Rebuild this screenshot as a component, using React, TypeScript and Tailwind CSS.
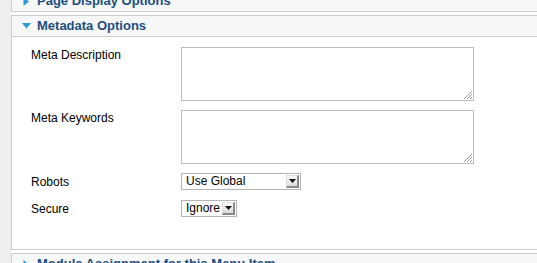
import React from "react";

const TITLE = "text-[13px] leading-[20px] font-bold text-[#1d4e7e]";

function ArrowDown() {
  return (
    <svg width="9" height="6" viewBox="0 0 9 6" className="shrink-0">
      <path d="M0 0 H9 L4.5 5.5 Z" fill="#2b9ad6" />
    </svg>
  );
}

function ArrowRight() {
  return (
    <svg width="9" height="9" viewBox="0 0 9 9" className="shrink-0">
      <path d="M1.5 0 L7 4.5 L1.5 9 Z" fill="#2b9ad6" />
    </svg>
  );
}

function PanelHeader({ title, open = false }: { title: string; open?: boolean }) {
  return (
    <div className="h-[20px] flex items-center gap-[6px] pl-[10px] bg-[#f6f7f7]">
      {open ? <ArrowDown /> : <ArrowRight />}
      <span className={TITLE}>{title}</span>
    </div>
  );
}

function TextBox() {
  return (
    <div className="relative w-[293px] h-[54px] border border-[#bdbdbd] bg-white">
      {/* resize grip */}
      <svg width="10" height="10" viewBox="0 0 10 10" className="absolute right-0 bottom-0">
        <path d="M9 1 L1 9 M9 4 L4 9 M9 7 L7 9" stroke="#9a9a9a" strokeWidth="1" />
      </svg>
    </div>
  );
}

function Select({ value, width }: { value: string; width: string }) {
  return (
    <div className={`${width} h-[17px] flex items-center justify-between border border-[#b5b5b5] bg-white pl-[4px] pr-[1px]`}>
      <span className="text-[12px] leading-[15px] text-black">{value}</span>
      <div className="w-[13px] h-[13px] flex items-center justify-center bg-gradient-to-b from-[#fafafa] to-[#dcdcdc] border-r-2 border-b-2 border-r-[#8a8a8a] border-b-[#8a8a8a] border-l border-t border-l-[#e0e0e0] border-t-[#e0e0e0]">
        <svg width="7" height="4" viewBox="0 0 7 4">
          <path d="M0 0 H7 L3.5 4 Z" fill="#111" />
        </svg>
      </div>
    </div>
  );
}

export default function App() {
  return (
    <div className="w-[537px] h-[263px] overflow-hidden flex bg-white font-['Liberation_Sans',Arial,sans-serif]">
      <div className="w-[11px] shrink-0 bg-[#efefef]" />
      <div className="w-[530px] shrink-0 flex flex-col gap-[3px] -mt-[10px]">
        <div className="border border-[#cccccc]">
          <PanelHeader title="Page Display Options" />
        </div>

        <div className="border border-[#cccccc]">
          <div className="border-b border-[#cccccc]">
            <PanelHeader title="Metadata Options" open />
          </div>
          <div className="h-[212px] pl-[19px] pt-[10px] flex flex-col text-[12px] text-black">
            <div className="flex items-start">
              <label className="w-[150px] leading-[16px]">Meta Description</label>
              <TextBox />
            </div>
            <div className="flex items-start mt-[9px]">
              <label className="w-[150px] leading-[16px]">Meta Keywords</label>
              <TextBox />
            </div>
            <div className="flex items-center mt-[9px]">
              <label className="w-[150px] leading-[16px]">Robots</label>
              <Select value="Use Global" width="w-[120px]" />
            </div>
            <div className="flex items-center mt-[10px]">
              <label className="w-[150px] leading-[16px]">Secure</label>
              <Select value="Ignore" width="w-[56px]" />
            </div>
          </div>
        </div>

        <div className="border border-[#cccccc]">
          <PanelHeader title="Module Assignment for this Menu Item" />
        </div>
      </div>
    </div>
  );
}
